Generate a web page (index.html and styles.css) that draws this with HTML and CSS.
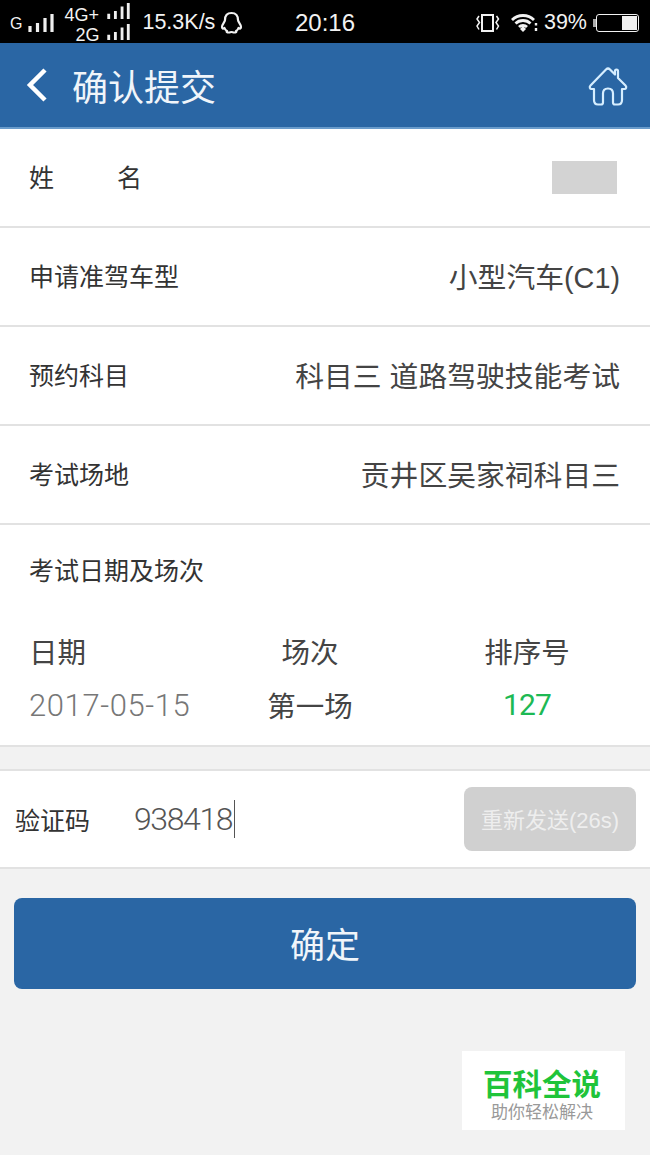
FILE: index.html
```html
<!DOCTYPE html>
<html lang="zh-CN">
<head>
  <meta charset="UTF-8">
  <title>确认提交</title>
  <link rel="stylesheet" href="styles.css">
</head>

<body>
  <div class="phone">
    <!-- Status bar -->
    <div class="status-bar">
      <div class="status-left">
        <span class="sim-one">G</span>
        <svg class="signal" width="26" height="18" viewBox="0 0 26 18"><path d="M2 12v6M9.500 9v9M17 4v14M24 0v18" stroke="#f0f0f0" stroke-width="3.200"/></svg>
        <div class="sim-stack">
          <div class="sim-row sim-row-top">
            <span>4G+</span>
            <svg class="signal" width="25" height="16" viewBox="0 0 26 18"><path d="M2 12v6M9.500 9v9M17 4v14M24 0v18" stroke="#f0f0f0" stroke-width="3.200"/></svg>
          </div>
          <div class="sim-row">
            <span>2G</span>
            <svg class="signal" width="25" height="16" viewBox="0 0 26 18"><path d="M2 12v6M9.500 9v9M17 4v14M24 0v18" stroke="#f0f0f0" stroke-width="3.200"/></svg>
          </div>
        </div>
        <span class="speed">15.3K/s</span>
        <svg class="qq" width="23" height="23" viewBox="0 0 23 23"><path d="M11.500 2C7 2 5 5 5 9c0 2-3 4-3 7 0 1.500 1 2 2.500 1 .5 1.500 1.500 2.500 2.500 3-1 1 0 1.500 2 1.500 1 0 1.500-.5 2.500-.5s1.500.5 2.500.5c2 0 3-.5 2-1.500 1-.5 2-1.500 2.500-3 1.500 1 2.500.5 2.500-1 0-3-3-5-3-7 0-4-2-7-6.500-7z" fill="none" stroke="#f2f2f2" stroke-width="2.200" stroke-linejoin="round"/></svg>
      </div>
      <span class="clock">20:16</span>
      <div class="status-right">
        <svg class="vibrate" width="24" height="20" viewBox="0 0 24 20"><rect x="6" y="2" width="11" height="16" fill="none" stroke="#f2f2f2" stroke-width="2"/><path d="M3 3L1 6l2.500 3.500L1 13l2 3.500M20.500 3l2 3-2.500 3.500 2.500 3.500-2 3.500" fill="none" stroke="#f2f2f2" stroke-width="1.500"/></svg>
        <svg class="wifi" width="27" height="20" viewBox="0 0 27 20"><path d="M1 7c6-6 16-6 22 0M4.500 10.500c4-4 11-4 15 0M8 14c2-2 6-2 8 0" fill="none" stroke="#f2f2f2" stroke-width="2.800"/><path d="M9 16l3-3 3 3-3 3z" fill="#f2f2f2"/><path d="M25 10v2.500M25 15v3" stroke="#f2f2f2" stroke-width="2.400"/></svg>
        <span class="battery-text">39%</span>
        <span class="battery-nub"></span>
        <div class="battery"><div class="battery-fill"></div></div>
      </div>
    </div>

    <!-- Title bar -->
    <header class="title-bar">
      <svg class="back" width="24" height="36" viewBox="0 0 24 36"><path d="M20 3L5 18l15 15" fill="none" stroke="#fff" stroke-width="4.500"/></svg>
      <h1>确认提交</h1>
      <svg class="home" width="42" height="44" viewBox="0 0 42 44"><path d="M3.500 22.500L19 6.500c1.500-1.500 2.500-1.500 4 0l5 5V8c0-1 .5-1.500 1.500-1.500s1.500.5 1.500 1.500v7l7.500 7.500c1.500 1.500.5 3.500-1 3.500H35v11c0 3-1.500 4.500-4 4.500h-3c-1.500 0-2-.5-2-2v-9c0-3-2-5-5-5s-5 2-5 5v9c0 1.500-.5 2-2 2h-3c-2.500 0-4-1.500-4-4.500V26H4.500c-1.500 0-2.500-2-1-3.500z" fill="none" stroke="#d6eeff" stroke-width="2.200" stroke-linejoin="round"/></svg>
    </header>

    <!-- Details -->
    <section class="info-row">
      <span class="info-label name-label"><span>姓</span><span>名</span></span>
      <div class="name-mask"></div>
    </section>
    <section class="info-row">
      <span class="info-label">申请准驾车型</span>
      <span class="info-value">小型汽车(C1)</span>
    </section>
    <section class="info-row">
      <span class="info-label">预约科目</span>
      <span class="info-value">科目三 道路驾驶技能考试</span>
    </section>
    <section class="info-row">
      <span class="info-label">考试场地</span>
      <span class="info-value">贡井区吴家祠科目三</span>
    </section>

    <section class="date-block">
      <div class="info-label date-title">考试日期及场次</div>
      <div class="date-grid">
        <span class="col-head col-date">日期</span>
        <span class="col-head">场次</span>
        <span class="col-head">排序号</span>
        <span class="date-value">2017-05-15</span>
        <span class="session-value">第一场</span>
        <span class="queue-value">127</span>
      </div>
    </section>

    <!-- Code -->
    <section class="code-row">
      <span class="code-label">验证码</span>
      <span class="code-value">938418</span>
      <span class="caret"></span>
      <button class="resend-btn">重新发送(26s)</button>
    </section>

    <button class="confirm-btn">确定</button>

    <div class="watermark">
      <div class="wm-title">百科全说</div>
      <div class="wm-sub">助你轻松解决</div>
    </div>
  </div>
</body>
</html>
```

FILE: styles.css
```css
* {
  box-sizing: border-box;
}
body {
  margin: 0;
  background-color: #f2f2f2;
  font-family: "Liberation Sans", "Noto Sans CJK SC", sans-serif;
}
.phone {
  width: 650px;
  height: 1155px;
  overflow: hidden;
  display: flex;
  flex-direction: column;
}
.status-bar {
  height: 43px;
  padding-top: 2px;
  background-color: #000;
  color: #f2f2f2;
  display: grid;
  grid-template-columns: 295px 60px 1fr;
  align-items: center;
}
.status-left {
  display: flex;
  align-items: center;
  padding-left: 10px;
}
.sim-one {
  font-size: 16px;
  margin-right: 6px;
  padding-top: 3px;
}
.sim-stack {
  margin-left: 10px;
  width: 67px;
  font-size: 18px;
}
.sim-row {
  display: flex;
  justify-content: flex-end;
  align-items: center;
  gap: 7px;
  height: 19px;
}
.sim-row span {
  padding-top: 6px;
}
.sim-row-top {
  justify-content: space-between;
  margin-top: -2px;
  margin-bottom: 2px;
  gap: 0;
}
.sim-row-top span {
  padding-top: 8px;
}
.speed {
  margin-left: 11px;
  font-size: 21.500px;
}
.qq {
  margin-left: 5px;
}
.clock {
  font-size: 24px;
  white-space: nowrap;
}
.status-right {
  display: flex;
  align-items: center;
  justify-content: flex-end;
  padding-right: 11px;
}
.wifi {
  margin-left: 11px;
}
.battery-text {
  font-size: 21.500px;
  margin-left: 6px;
}
.battery-nub {
  width: 3px;
  height: 8px;
  margin-left: 6px;
  background-color: #aaa;
}
.battery {
  width: 43px;
  height: 18px;
  border: 1px solid #f2f2f2;
  border-radius: 3px;
  padding: 1px;
  display: flex;
  justify-content: flex-end;
}
.battery-fill {
  width: 15px;
  background-color: #f2f2f2;
}
.title-bar {
  height: 86px;
  background-color: #2a66a4;
  border-bottom: 2px solid #6a9ccb;
  display: flex;
  align-items: center;
  padding: 0 21px 0 25px;
}
.title-bar h1 {
  margin: 0 0 0 23px;
  font-size: 36px;
  font-weight: normal;
  color: #f0f5fa;
  flex: 1;
}
.back {
  flex: none;
}
.info-row {
  height: 99px;
  background-color: #fff;
  border-bottom: 2px solid #e2e2e2;
  display: flex;
  align-items: center;
  justify-content: space-between;
  padding: 0 30px 3px 29px;
}
.info-label {
  font-size: 25px;
  color: #333;
}
.info-value {
  font-size: 28.800px;
  color: #444;
}
.name-label {
  width: 113px;
  display: flex;
  justify-content: space-between;
}
.name-mask {
  width: 65px;
  height: 33px;
  margin: 3px 3px 0 0;
  background-color: #d3d3d3;
}
.date-block {
  height: 222px;
  background-color: #fff;
  border-bottom: 2px solid #e2e2e2;
  padding-top: 27px;
}
.date-title {
  padding-left: 29px;
  line-height: 38px;
}
.date-grid {
  margin-top: 33px;
  display: grid;
  grid-template-columns: 214px 188px 1fr;
  grid-auto-rows: 54px;
  align-items: center;
  padding-left: 2px;
  justify-items: center;
  color: #444;
}
.col-head {
  font-size: 28.500px;
}
.col-date {
  justify-self: start;
  padding-left: 27px;
}
.date-value {
  justify-self: start;
  padding: 3px 0 0 27px;
  font-family: Roboto, sans-serif;
  font-weight: 300;
  font-size: 31px;
  letter-spacing: 0.600px;
  color: #777;
}
.session-value {
  font-size: 28.500px;
}
.queue-value {
  padding-top: 1px;
  font-family: Roboto, sans-serif;
  font-size: 30px;
  letter-spacing: -0.800px;
  color: #1db954;
}
.code-row {
  margin-top: 22px;
  height: 100px;
  background-color: #fff;
  border-top: 2px solid #e2e2e2;
  border-bottom: 2px solid #e2e2e2;
  display: flex;
  align-items: center;
  padding: 0 14px 0 15px;
}
.code-label {
  width: 119px;
  font-size: 25px;
  color: #333;
}
.code-value {
  font-family: Roboto, sans-serif;
  font-weight: 300;
  font-size: 32px;
  letter-spacing: -1.400px;
  color: #555;
}
.caret {
  width: 1px;
  height: 38px;
  margin-left: 2px;
  background-color: #555;
}
.resend-btn {
  margin-left: auto;
  width: 172px;
  height: 64px;
  border: none;
  border-radius: 8px;
  background-color: #d0d0d0;
  color: #eee;
  font-family: inherit;
  font-size: 22px;
  padding: 0 0 2px;
}
.confirm-btn {
  margin: 29px 14px 0;
  height: 91px;
  flex: none;
  border: none;
  border-radius: 8px;
  background-color: #2a66a4;
  color: #f0f5fa;
  font-family: inherit;
  font-size: 35px;
  padding: 0 0 2px;
}
.watermark {
  margin: 62px 25px 0 auto;
  width: 163px;
  height: 79px;
  background-color: #fff;
  text-align: center;
  padding: 17px 3px 0 0;
}
.wm-title {
  font-size: 29.500px;
  line-height: 34px;
  font-weight: bold;
  color: #1fc43a;
}
.wm-sub {
  font-size: 17px;
  line-height: 22px;
  color: #999;
}
```
